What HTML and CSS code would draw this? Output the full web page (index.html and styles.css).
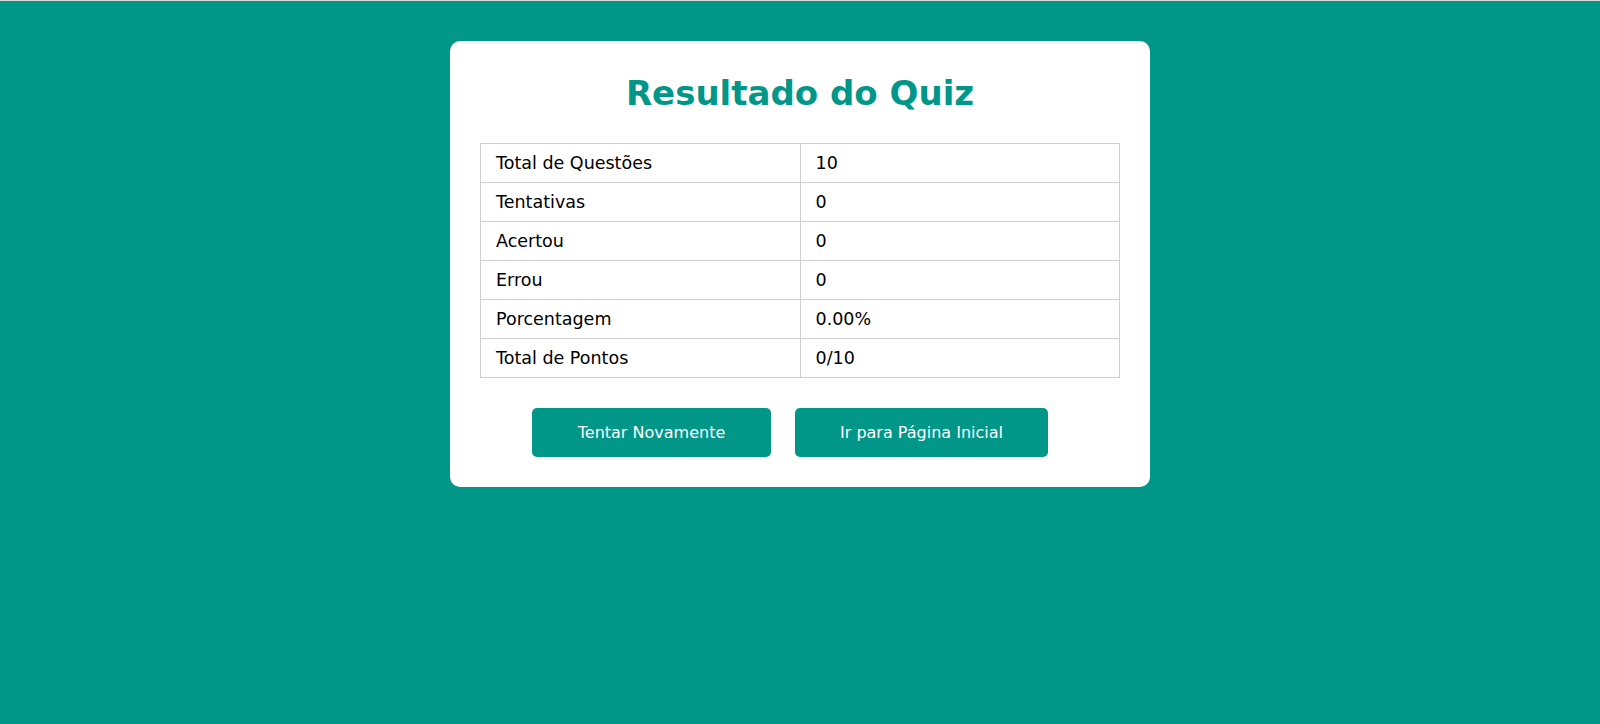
FILE: index.html
```html
<!DOCTYPE html>
<html lang="pt-BR">
<head>
<meta charset="utf-8">
<title>Resultado do Quiz</title>
<link rel="stylesheet" href="styles.css">
</head>
<body>
  <main class="card">
    <h1 class="title">Resultado do Quiz</h1>
    <table class="results">
      <tbody>
        <tr><td>Total de Questões</td><td>10</td></tr>
        <tr><td>Tentativas</td><td>0</td></tr>
        <tr><td>Acertou</td><td>0</td></tr>
        <tr><td>Errou</td><td>0</td></tr>
        <tr><td>Porcentagem</td><td>0.00%</td></tr>
        <tr><td>Total de Pontos</td><td>0/10</td></tr>
      </tbody>
    </table>
    <div class="actions">
      <button class="btn btn-retry" type="button">Tentar Novamente</button>
      <button class="btn btn-home" type="button">Ir para Página Inicial</button>
    </div>
  </main>
</body>
</html>
```

FILE: styles.css
```css
* { box-sizing: border-box; }

html, body {
  margin: 0;
  padding: 0;
}

body {
  min-height: 724px;
  background: #009688;
  border-top: 1px solid #dcdcdc;
  font-family: "DejaVu Sans", "Noto Sans", sans-serif;
  color: #000;
}

.card {
  width: 700px;
  margin: 40px auto 0;
  padding: 30px;
  background: #fff;
  border-radius: 10px;
}

.title {
  margin: 0 0 28px;
  height: 44px;
  line-height: 44px;
  font-size: 34px;
  font-weight: 700;
  color: #009688;
  text-align: center;
}

.results {
  width: 100%;
  border-collapse: collapse;
  table-layout: fixed;
}

.results td {
  width: 50%;
  border: 1px solid #cfcfcf;
  padding: 9px 15px;
  line-height: 20px;
  font-size: 17.5px;
}

.actions {
  display: flex;
  justify-content: center;
  gap: 4px;
  margin-top: 30px;
}

.btn {
  margin-right: 20px;
  padding: 15px 0;
  border: 0;
  border-radius: 5px;
  background: #009688;
  color: #fff;
  font-family: inherit;
  font-size: 16px;
  line-height: 19px;
  cursor: pointer;
}

.btn-retry { width: 239px; }
.btn-home { width: 253px; }
```
